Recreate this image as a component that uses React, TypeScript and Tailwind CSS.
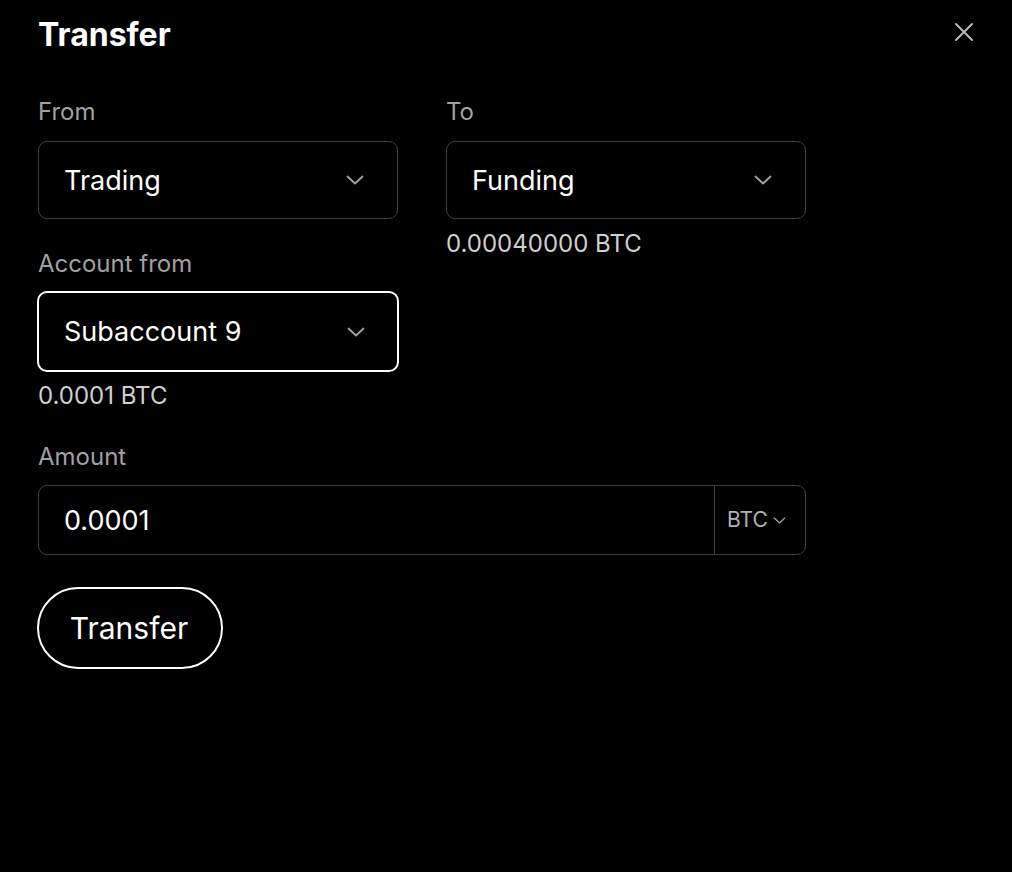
import { useState } from "react";

function Chevron({ className = "" }: { className?: string }) {
  return (
    <svg viewBox="0 0 18 10" className={className} fill="none" stroke="currentColor" strokeWidth={1.8} strokeLinecap="round" strokeLinejoin="round">
      <path d="M1.5 1.5 L9 8.5 L16.5 1.5" />
    </svg>
  );
}

function SelectBox({ value, focused = false }: { value: string; focused?: boolean }) {
  return (
    <button
      type="button"
      className={
        focused
          ? "flex h-[81px] w-[362px] items-center justify-between rounded-[10px] border-2 border-white pl-[25px] pr-[32px] pt-[2px] text-left"
          : "flex h-[78px] w-[360px] items-center justify-between rounded-[9px] border-[1.5px] border-[#3d3d3d] pl-[25px] pr-[33px] pt-[2px] text-left"
      }
    >
      <span className="text-[27px] text-white">{value}</span>
      <Chevron className="-mt-[2px] h-[10px] w-[18px] text-[#a3a3a3]" />
    </button>
  );
}

export default function App() {
  const [amount, setAmount] = useState("0.0001");

  return (
    <div className="min-h-[872px] w-full bg-black pl-[38px] pt-[15px] font-['Inter',sans-serif] text-white">
      <div className="flex items-start justify-between pr-[38px]">
        <h1 className="text-[32px] font-bold leading-[40px]">Transfer</h1>
        <button type="button" className="mt-[7px] text-[#b8b8b8]" aria-label="Close">
          <svg viewBox="0 0 20 20" className="h-[20px] w-[20px]" fill="none" stroke="currentColor" strokeWidth={2} strokeLinecap="round">
            <path d="M2 2 L18 18 M18 2 L2 18" />
          </svg>
        </button>
      </div>

      <div className="mt-[41px] flex gap-[48px]">
        {/* left column */}
        <div className="flex w-[360px] flex-col">
          <label className="text-[24px] leading-[32px] text-[#a1a1a1]">From</label>
          <div className="mt-[13px]">
            <SelectBox value="Trading" />
          </div>
          <label className="mt-[29px] text-[24px] leading-[32px] text-[#a1a1a1]">Account from</label>
          <div className="-ml-[1px] mt-[11px]">
            <SelectBox value="Subaccount 9" focused />
          </div>
          <p className="mt-[8px] text-[24px] leading-[32px] text-[#cfcfcf]">0.0001 BTC</p>
        </div>

        {/* right column */}
        <div className="flex w-[360px] flex-col">
          <label className="text-[24px] leading-[32px] text-[#a1a1a1]">To</label>
          <div className="mt-[13px]">
            <SelectBox value="Funding" />
          </div>
          <p className="mt-[9px] text-[24px] leading-[32px] text-[#cfcfcf]">0.00040000 BTC</p>
        </div>
      </div>

      <label className="mt-[29px] block text-[24px] leading-[32px] text-[#a1a1a1]">Amount</label>
      <div className="mt-[12px] flex h-[70px] w-[768px] rounded-[9px] border-[1.5px] border-[#3d3d3d]">
        <input
          value={amount}
          onChange={(e) => setAmount(e.target.value)}
          className="min-w-0 flex-1 bg-transparent pl-[25px] pt-[2px] text-[27px] text-white outline-none"
        />
        <div className="flex w-[91px] items-center gap-[5px] border-l-[1.5px] border-[#3d3d3d] pl-[12px]">
          <span className="text-[21px] text-[#b0b0b0]">BTC</span>
          <Chevron className="h-[7px] w-[13px] text-[#a3a3a3]" />
        </div>
      </div>

      <button
        type="button"
        className="-ml-[1px] mt-[32px] flex h-[82px] w-[186px] items-center justify-center rounded-full border-2 border-white pr-[2px] text-[30px] text-white"
      >
        Transfer
      </button>
    </div>
  );
}
